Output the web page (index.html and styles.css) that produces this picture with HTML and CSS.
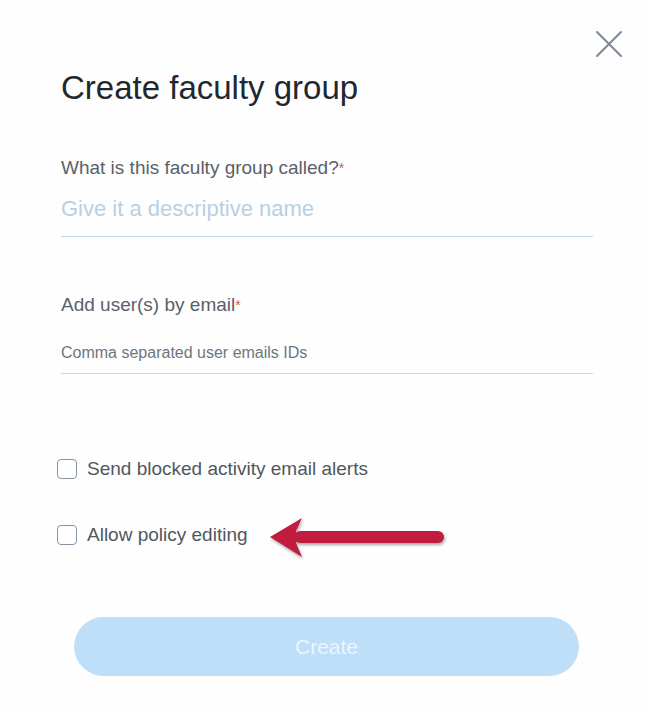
FILE: index.html
```html
<!DOCTYPE html>
<html lang="en">
<head>
<meta charset="utf-8">
<title>Create faculty group</title>
<link rel="stylesheet" href="styles.css">
</head>
<body>
<div class="modal">
  <button class="close" aria-label="Close">
    <svg width="28" height="28" viewBox="0 0 28 28"><path d="M2 2 L26 26 M26 2 L2 26" stroke="#7d8893" stroke-width="2" stroke-linecap="round" fill="none"/></svg>
  </button>
  <h1 class="title">Create faculty group</h1>

  <div class="field field-name">
    <div class="label">What is this faculty group called?<span class="req">*</span></div>
    <div class="input input-large">Give it a descriptive name</div>
  </div>

  <div class="field field-email">
    <div class="label">Add user(s) by email<span class="req">*</span></div>
    <div class="input input-small">Comma separated user emails IDs</div>
  </div>

  <div class="checks">
    <label class="check"><span class="box"></span><span class="check-text">Send blocked activity email alerts</span></label>
    <label class="check check-policy"><span class="box"></span><span class="check-text">Allow policy editing</span>
      <svg class="arrow" width="190" height="50" viewBox="0 0 190 50">
        <defs>
          <filter id="sh" x="-10%" y="-30%" width="120%" height="170%">
            <feDropShadow dx="1" dy="2" stdDeviation="1.5" flood-color="#000" flood-opacity="0.35"/>
          </filter>
        </defs>
        <g filter="url(#sh)" fill="#bf1f41">
          <polygon points="2,23 34,4 28,17 28,29 34,43"/>
          <rect x="26" y="17" width="150" height="12" rx="6"/>
        </g>
      </svg>
    </label>
  </div>

  <div class="actions">
    <button class="create">Create</button>
  </div>
</div>
</body>
</html>
```
FILE: styles.css
```css
* { box-sizing: border-box; }
html, body { margin: 0; padding: 0; background: #fefefe; }
body {
  font-family: "Liberation Sans", Arial, sans-serif;
  width: 649px;
  height: 714px;
  overflow: hidden;
}
.modal {
  position: relative;
  padding: 68px 56px 0 61px;
}
.close {
  position: absolute;
  top: 30px;
  left: 595px;
  width: 28px;
  height: 28px;
  padding: 0;
  border: 0;
  background: none;
  display: block;
}
.close svg { display: block; }
.title {
  margin: 0;
  font-size: 33px;
  line-height: 40px;
  font-weight: normal;
  color: #1f2830;
}
.field { width: 532px; }
.field-name { margin-top: 48px; }
.field-email { margin-top: 56px; }
.label {
  font-size: 19px;
  line-height: 24px;
  color: #5a6168;
}
.req { color: #e0504f; font-size: 14px; vertical-align: top; }
.input { border-bottom: 1px solid #c6d9e8; }
.input-large {
  margin-top: 15px;
  font-size: 22px;
  line-height: 28px;
  padding-bottom: 13px;
  color: #b9d0e4;
}
.input-small {
  margin-top: 26px;
  font-size: 16px;
  line-height: 20px;
  padding-bottom: 10px;
  color: #6d767e;
}
.checks {
  margin-top: 85px;
  margin-left: -4px;
  display: flex;
  flex-direction: column;
  gap: 46px;
}
.check {
  position: relative;
  display: flex;
  align-items: center;
  gap: 10px;
  height: 20px;
}
.box {
  width: 20px;
  height: 20px;
  border: 1.5px solid #8693a0;
  border-radius: 4px;
  background: #fff;
  flex: none;
}
.check-text {
  font-size: 19px;
  line-height: 20px;
  color: #50575e;
}
.arrow {
  position: absolute;
  left: 211px;
  top: -11px;
}
.actions {
  margin-top: 72px;
  padding-left: 13px;
}
.create {
  display: block;
  width: 505px;
  height: 59px;
  border: 0;
  border-radius: 30px;
  background: #bfdff9;
  color: #eaf5fe;
  font-family: "Liberation Sans", Arial, sans-serif;
  font-size: 21px;
}
```
